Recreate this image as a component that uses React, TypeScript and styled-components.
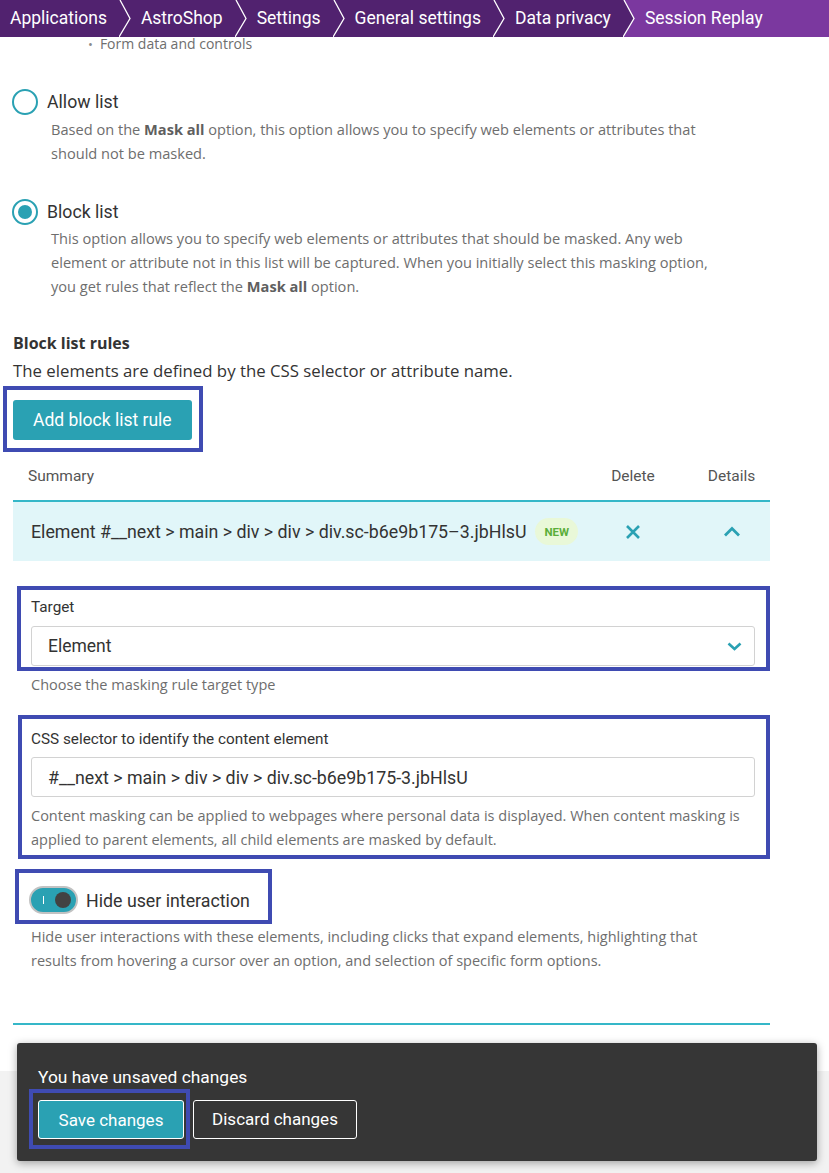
import React from 'react';
import styled, { createGlobalStyle } from 'styled-components';

const GlobalStyle = createGlobalStyle`
  html, body { margin: 0; padding: 0; background: #ffffff; }
  body {
    font-family: Roboto, "Noto Sans", "Liberation Sans", sans-serif;
    color: #353535;
    -webkit-font-smoothing: antialiased;
  }
  * { box-sizing: border-box; }
`;

const TEAL = '#2aa1b3';
const LINE_TEAL = '#35b7c8';
const ANNOT = '#3f4bb2';
const GRAY_TEXT = '#6e6e6e';
const BODY_FONT = '"Open Sans", "Noto Sans", sans-serif';

const Page = styled.div`
  width: 829px;
  min-height: 1173px;
  display: flex;
  flex-direction: column;
  overflow: hidden;
`;

const Crumbs = styled.nav`
  height: 37px;
  display: flex;
  align-items: stretch;
  background: #51226f;
  color: #ffffff;
`;

const Crumb = styled.div<{ $active?: boolean }>`
  display: flex;
  align-items: center;
  padding: 0 12px 1px 10px;
  font-size: 17.5px;
  white-space: nowrap;
  flex: ${(p) => (p.$active ? 1 : 'none')};
  background: ${(p) => (p.$active ? '#7b389f' : 'transparent')};
`;

const SepSvg = styled.svg`
  flex: none;
  display: block;
`;

const Separator: React.FC<{ fillNext?: boolean }> = ({ fillNext }) => (
  <SepSvg width="12" height="37" viewBox="0 0 12 37">
    {fillNext && <polygon points="1,0 12,0 12,37 0,37 11,18.5" fill="#7b389f" />}
    <polyline points="1,0 11,18.5 0,37" fill="none" stroke="#ffffff" strokeWidth="1.3" />
  </SepSvg>
);

const Content = styled.main`
  padding: 0 59px 0 13px;
  display: flex;
  flex-direction: column;
`;

const BulletItem = styled.div`
  margin-left: 75px;
  font-family: ${BODY_FONT};
  font-size: 14px;
  line-height: 14px;
  color: ${GRAY_TEXT};
  display: flex;
  gap: 7px;
  &::before {
    content: '•';
    font-size: 13px;
    color: #8a8a8a;
  }
`;

const RadioRow = styled.label<{ $mt: number }>`
  display: flex;
  align-items: center;
  gap: 9px;
  height: 26px;
  margin-top: ${(p) => p.$mt}px;
  font-size: 17.7px;
  color: #333333;
`;

const RadioCircle = styled.span<{ $checked?: boolean }>`
  width: 26px;
  height: 26px;
  margin-left: -1px;
  border-radius: 50%;
  border: 2px solid ${TEAL};
  display: flex;
  align-items: center;
  justify-content: center;
  &::after {
    content: '';
    width: 14px;
    height: 14px;
    border-radius: 50%;
    background: ${(p) => (p.$checked ? TEAL : 'transparent')};
  }
`;

const Desc = styled.p<{ $indent: number; $mt: number }>`
  margin: ${(p) => p.$mt}px 0 0 ${(p) => p.$indent}px;
  font-family: ${BODY_FONT};
  font-size: 14.6px;
  line-height: 24px;
  color: ${GRAY_TEXT};
  b {
    font-weight: 700;
    color: #5f5f5f;
  }
`;

const SectionTitle = styled.h3`
  margin: 34px 0 0;
  font-family: ${BODY_FONT};
  font-size: 16px;
  line-height: 22px;
  font-weight: 700;
  color: #333333;
`;

const SectionText = styled.p`
  margin: 6px 0 0;
  font-family: ${BODY_FONT};
  font-size: 16.8px;
  line-height: 22px;
  color: #333333;
`;

const Annot = styled.div<{ $mt: number; $ml: number; $w: number; $pad: string }>`
  border: 4px solid ${ANNOT};
  margin-top: ${(p) => p.$mt}px;
  margin-left: ${(p) => p.$ml}px;
  width: ${(p) => p.$w}px;
  padding: ${(p) => p.$pad};
  align-self: flex-start;
`;

const PrimaryButton = styled.button`
  height: 40px;
  padding: 0 20px;
  background: ${TEAL};
  color: #ffffff;
  border: none;
  border-radius: 3px;
  font-family: inherit;
  font-size: 17.5px;
  display: flex;
  align-items: center;
`;

const Table = styled.div`
  display: flex;
  flex-direction: column;
`;

const HeadRow = styled.div`
  display: grid;
  grid-template-columns: minmax(0, 1fr) 120px 77px;
  height: 50px;
  align-items: center;
  border-bottom: 2px solid ${LINE_TEAL};
  font-size: 15.5px;
  color: #555555;
`;

const HeadCell = styled.div<{ $first?: boolean }>`
  padding-left: ${(p) => (p.$first ? '15px' : '0')};
  text-align: ${(p) => (p.$first ? 'left' : 'center')};
`;

const BodyRow = styled.div`
  display: grid;
  grid-template-columns: minmax(0, 1fr) 120px 77px;
  height: 59px;
  align-items: center;
  background: #e1f6f9;
  font-size: 17.8px;
  color: #333333;
`;

const SummaryCell = styled.div`
  padding-left: 18px;
  display: flex;
  align-items: center;
  gap: 9px;
  white-space: nowrap;
`;

const IconCell = styled.div`
  display: flex;
  justify-content: center;
  align-items: center;
`;

const Badge = styled.span`
  height: 27px;
  padding: 0 9px;
  border-radius: 14px;
  background: #e9f8d8;
  color: #5aae3a;
  font-size: 11.5px;
  font-weight: 700;
  display: inline-flex;
  align-items: center;
  flex: none;
`;

const FieldLabel = styled.div`
  font-size: 15.3px;
  line-height: 18px;
  color: #333333;
`;

const FieldBox = styled.div<{ $mt: number; $size: number }>`
  margin-top: ${(p) => p.$mt}px;
  height: 40px;
  border: 1px solid #d2d2d2;
  border-radius: 3px;
  padding: 0 12px 0 16px;
  display: flex;
  align-items: center;
  justify-content: space-between;
  font-size: ${(p) => p.$size}px;
  color: #333333;
  background: #ffffff;
`;

const Hint = styled.p<{ $mt: number; $indent: number; $lh: number }>`
  margin: ${(p) => p.$mt}px 0 0 ${(p) => p.$indent}px;
  font-family: ${BODY_FONT};
  font-size: 14.5px;
  line-height: ${(p) => p.$lh}px;
  color: ${GRAY_TEXT};
`;

const ToggleRow = styled.label`
  display: flex;
  align-items: center;
  gap: 8px;
  font-size: 17.8px;
  color: #333333;
`;

const ToggleTrack = styled.span<{ $on?: boolean }>`
  width: 49px;
  height: 28px;
  border-radius: 14px;
  border: 2px solid #c2c2c2;
  background: ${(p) => (p.$on ? TEAL : '#dddddd')};
  display: flex;
  align-items: center;
  justify-content: space-between;
  padding: 0 5px 0 12px;
`;

const ToggleMark = styled.span`
  width: 1px;
  height: 8px;
  background: #ffffff;
`;

const ToggleKnob = styled.span`
  width: 16px;
  height: 16px;
  border-radius: 50%;
  background: #424242;
`;

const EndLine = styled.div`
  margin-top: 50px;
  height: 2px;
  background: ${LINE_TEAL};
`;

const Footer = styled.footer`
  margin-top: 46px;
  height: 103px;
  background: #f2f2f2;
  position: relative;
`;

const Toast = styled.div`
  position: absolute;
  top: -28px;
  left: 17px;
  width: 800px;
  height: 118px;
  background: #363636;
  border-radius: 3px;
  box-shadow: 0 2px 8px rgba(0, 0, 0, 0.35);
  padding: 23px 0 0 12px;
  color: #ffffff;
  display: flex;
  flex-direction: column;
`;

const ToastTitle = styled.div`
  padding-left: 9px;
  font-size: 17.4px;
  line-height: 22px;
`;

const ToastActions = styled.div`
  display: flex;
  align-items: center;
  gap: 3px;
  margin-top: 1px;
`;

const SaveFrame = styled.div`
  border: 4px solid ${ANNOT};
  padding: 7px 2px 6px 5px;
`;

const ToastButton = styled.button<{ $primary?: boolean }>`
  height: 39px;
  width: ${(p) => (p.$primary ? 146 : 164)}px;
  border: 1px solid #ffffff;
  border-radius: 3px;
  background: ${(p) => (p.$primary ? TEAL : 'transparent')};
  color: #ffffff;
  font-family: inherit;
  font-size: 17px;
  display: flex;
  align-items: center;
  justify-content: center;
`;

const CloseIcon = () => (
  <svg width="16" height="16" viewBox="0 0 16 16">
    <path d="M2 2 L14 14 M14 2 L2 14" stroke={TEAL} strokeWidth="2.6" strokeLinecap="butt" fill="none" />
  </svg>
);

const ChevronUp = () => (
  <svg width="18" height="11" viewBox="0 0 18 11">
    <path d="M2 9.5 L9 2.5 L16 9.5" stroke={TEAL} strokeWidth="2.8" fill="none" />
  </svg>
);

const ChevronDown = () => (
  <svg width="15" height="9" viewBox="0 0 15 9">
    <path d="M1.5 1.5 L7.5 7 L13.5 1.5" stroke={TEAL} strokeWidth="2.6" fill="none" />
  </svg>
);

const crumbs = ['Applications', 'AstroShop', 'Settings', 'General settings', 'Data privacy', 'Session Replay'];

export default function App() {
  return (
    <>
      <GlobalStyle />
      <Page>
        <Crumbs>
          {crumbs.map((c, i) => (
            <React.Fragment key={c}>
              {i > 0 && <Separator fillNext={i === crumbs.length - 1} />}
              <Crumb $active={i === crumbs.length - 1}>{c}</Crumb>
            </React.Fragment>
          ))}
        </Crumbs>

        <Content>
          <BulletItem>Form data and controls</BulletItem>

          <RadioRow $mt={38}>
            <RadioCircle />
            Allow list
          </RadioRow>
          <Desc $indent={38} $mt={2}>
            Based on the <b>Mask all</b> option, this option allows you to specify web elements or attributes that
            <br />
            should not be masked.
          </Desc>

          <RadioRow $mt={34}>
            <RadioCircle $checked />
            Block list
          </RadioRow>
          <Desc $indent={38} $mt={1}>
            This option allows you to specify web elements or attributes that should be masked. Any web
            <br />
            element or attribute not in this list will be captured. When you initially select this masking option,
            <br />
            you get rules that reflect the <b>Mask all</b> option.
          </Desc>

          <SectionTitle>Block list rules</SectionTitle>
          <SectionText>The elements are defined by the CSS selector or attribute name.</SectionText>

          <Annot $mt={4} $ml={-10} $w={200} $pad="10px 6px 8px 6px">
            <PrimaryButton>Add block list rule</PrimaryButton>
          </Annot>

          <Table>
            <HeadRow>
              <HeadCell $first>Summary</HeadCell>
              <HeadCell>Delete</HeadCell>
              <HeadCell>Details</HeadCell>
            </HeadRow>
            <BodyRow>
              <SummaryCell>
                Element #__next &gt; main &gt; div &gt; div &gt; div.sc-b6e9b175–3.jbHlsU
                <Badge>NEW</Badge>
              </SummaryCell>
              <IconCell>
                <CloseIcon />
              </IconCell>
              <IconCell>
                <ChevronUp />
              </IconCell>
            </BodyRow>
          </Table>

          <Annot $mt={25} $ml={4} $w={753} $pad="8px 11px 1px 10px">
            <FieldLabel>Target</FieldLabel>
            <FieldBox $mt={10} $size={17.5}>
              Element
              <ChevronDown />
            </FieldBox>
          </Annot>
          <Hint $mt={4} $indent={18} $lh={20}>
            Choose the masking rule target type
          </Hint>

          <Annot $mt={20} $ml={5} $w={752} $pad="11px 11px 3px 9px">
            <FieldLabel>CSS selector to identify the content element</FieldLabel>
            <FieldBox $mt={9} $size={17.8}>
              #__next &gt; main &gt; div &gt; div &gt; div.sc-b6e9b175-3.jbHlsU
            </FieldBox>
            <Hint $mt={7} $indent={0} $lh={24}>
              Content masking can be applied to webpages where personal data is displayed. When content masking is
              <br />
              applied to parent elements, all child elements are masked by default.
            </Hint>
          </Annot>

          <Annot $mt={10} $ml={2} $w={257} $pad="13px 0 6px 10px">
            <ToggleRow>
              <ToggleTrack $on>
                <ToggleMark />
                <ToggleKnob />
              </ToggleTrack>
              Hide user interaction
            </ToggleRow>
          </Annot>
          <Hint $mt={1} $indent={18} $lh={24}>
            Hide user interactions with these elements, including clicks that expand elements, highlighting that
            <br />
            results from hovering a cursor over an option, and selection of specific form options.
          </Hint>

          <EndLine />
        </Content>

        <Footer>
          <Toast>
            <ToastTitle>You have unsaved changes</ToastTitle>
            <ToastActions>
              <SaveFrame>
                <ToastButton $primary>Save changes</ToastButton>
              </SaveFrame>
              <ToastButton>Discard changes</ToastButton>
            </ToastActions>
          </Toast>
        </Footer>
      </Page>
    </>
  );
}
